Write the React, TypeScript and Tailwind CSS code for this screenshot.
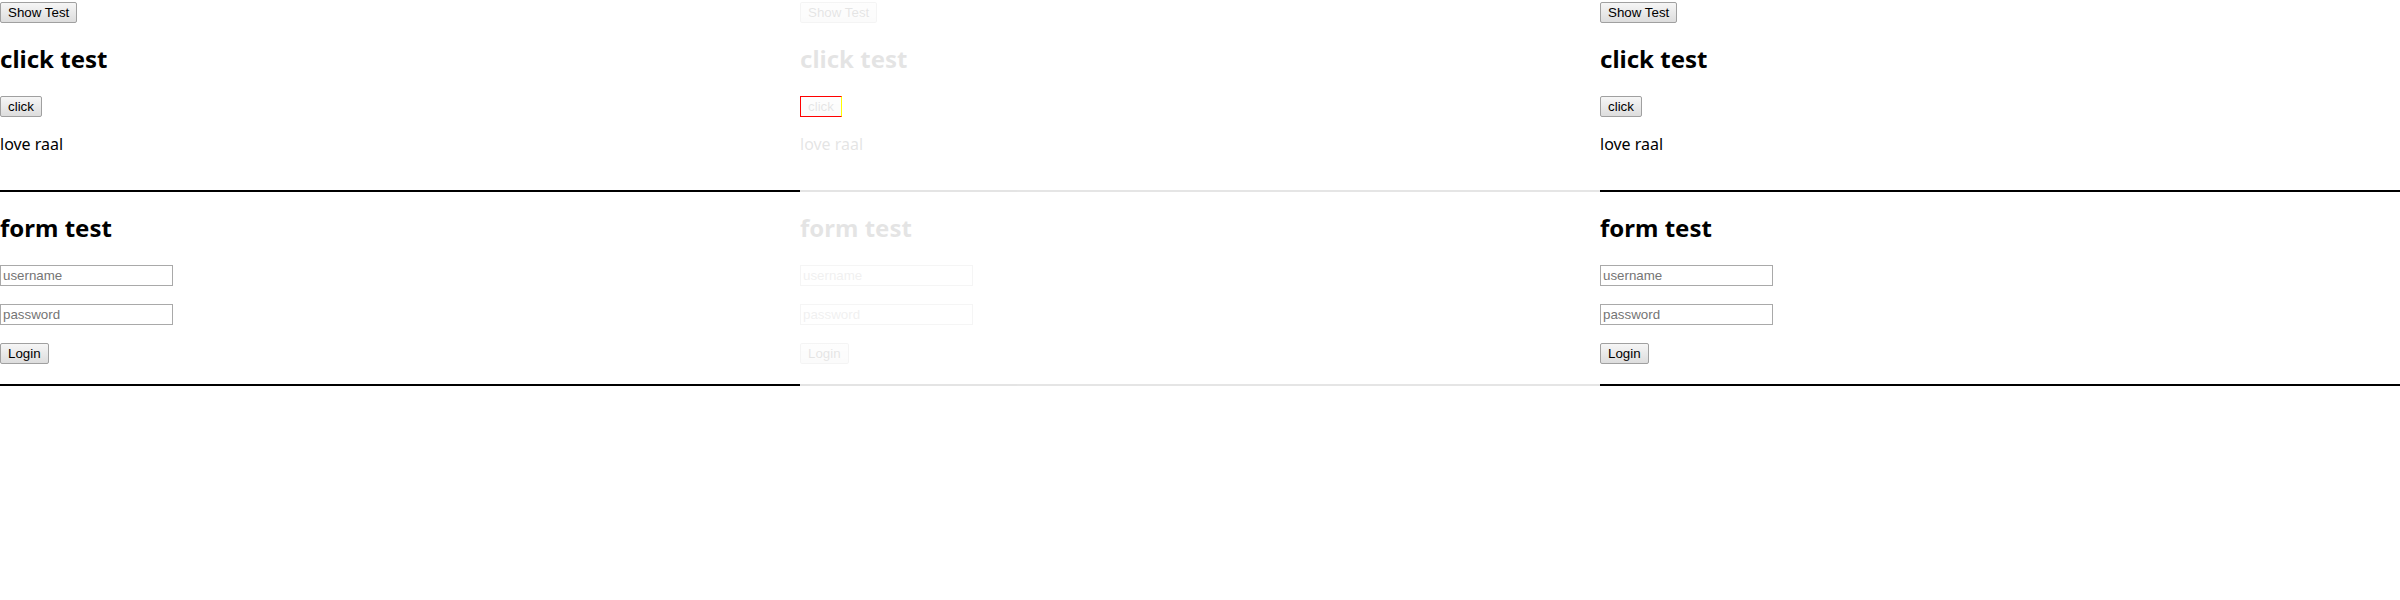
import React from 'react';

const btn =
  "block h-[21px] px-[7px] border border-[#a0a0a0] rounded-[2px] bg-gradient-to-b from-[#f6f6f6] to-[#dddddd] text-[13.33px] leading-[19px] text-black font-['Liberation_Sans',Arial,sans-serif]";
const input =
  "block w-[173px] h-[21px] px-[2px] border border-[#a9a9a9] bg-white text-[13.33px] leading-[19px] font-['Liberation_Sans',Arial,sans-serif] placeholder:text-[#757575] outline-none";
const heading = "text-[24px] leading-[32px] font-bold font-['Noto_Sans',sans-serif] text-black";

function Panel({ faded }: { faded?: boolean }) {
  return (
    <div className="w-[800px] shrink-0">
      <div className={faded ? 'opacity-[0.1]' : ''}>
        <button className={`${btn} mt-[2px]`}>Show Test</button>
        <h2 className={`${heading} mt-[20px]`}>click test</h2>
        <button className={`${btn} mt-[21px]`}>click</button>
        <p className="mt-[16px] text-[16px] leading-[22px] font-['Noto_Sans',sans-serif] text-black">love raal</p>
        <hr className="mt-[35px] border-0 border-t-2 border-black" />
        <h2 className={`${heading} mt-[20px]`}>form test</h2>
        <input className={`${input} mt-[21px]`} placeholder="username" />
        <input className={`${input} mt-[18px]`} placeholder="password" />
        <button className={`${btn} mt-[18px]`}>Login</button>
        <hr className="mt-[20px] border-0 border-t-2 border-black" />
      </div>
      {faded && (
        <div className="relative">
          {/* highlight box drawn over the faded click button */}
          <div className="absolute left-0 top-[-290px] w-[42px] h-[21px] border border-[#ff0000] border-r-[#ffff00]" />
        </div>
      )}
    </div>
  );
}

export default function App() {
  return (
    <div className="flex w-[2400px] h-[600px] bg-white">
      <Panel />
      <Panel faded />
      <Panel />
    </div>
  );
}
